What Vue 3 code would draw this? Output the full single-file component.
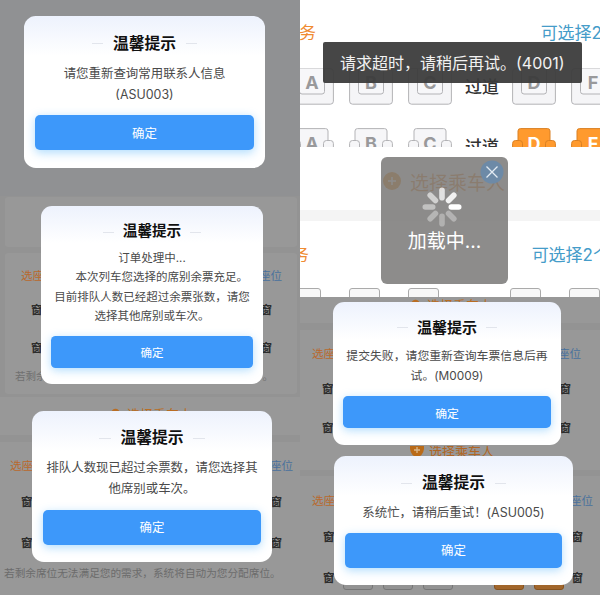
<script setup>
const dialogs = [
  { id: 'contacts', lines: ['请您重新查询常用联系人信息', '(ASU003)'] },
  { id: 'queue', lines: ['订单处理中...', '      本次列车您选择的席别余票充足。', '目前排队人数已经超过余票张数，请您', '选择其他席别或车次。'] },
  { id: 'over', lines: ['排队人数现已超过余票数，请您选择其', '他席别或车次。'] },
  { id: 'submit', lines: ['提交失败，请您重新查询车票信息后再', '试。(M0009)'] },
  { id: 'busy', lines: ['系统忙，请稍后重试！(ASU005)'] },
]
const spokes = [
  { a: 90, o: 1 }, { a: 45, o: 0.88 }, { a: 0, o: 0.74 }, { a: 315, o: 0.6 },
  { a: 270, o: 0.46 }, { a: 225, o: 0.36 }, { a: 180, o: 0.32 }, { a: 135, o: 0.34 },
]
const seats = ['A', 'B', 'C', '', 'D', 'F']
</script>

<template>
  <main class="collage">
    <div class="column">
      <section class="shot plain"></section>

      <section class="shot gray second">
        <div class="card blank"></div>
        <div class="card seats-card">
          <div class="line head"><span class="orange">选座</span><span class="blue">座位</span></div>
          <div class="line win"><span>窗</span><span>窗</span></div>
          <div class="line win"><span>窗</span><span>窗</span></div>
          <div class="line note"><span>若剩余</span><span>。</span></div>
        </div>
      </section>

      <section class="shot gray third">
        <div class="picker">
          <svg width="9" height="12" viewBox="0 0 9 12"><circle cx="4.5" cy="6" r="4.2" fill="#b96d23" /></svg>
          <span>选择乘车人</span>
        </div>
        <div class="band"></div>
        <div class="line head"><span class="orange">选座</span><span class="blue">座位</span></div>
        <div class="line win"><span>窗</span><span>窗</span></div>
        <div class="line win"><span>窗</span><span>窗</span></div>
        <p class="footnote">若剩余席位无法满足您的需求，系统将自动为您分配席位。</p>
      </section>
    </div>

    <div class="column">
      <section class="shot white timeout">
        <div class="service"><span class="orange">务</span><span class="blue">可选择2</span></div>
        <div class="seat-row">
          <template v-for="s in seats" :key="s">
            <svg v-if="s" class="seat" width="44" height="37" viewBox="0 0 44 37">
              <rect x=".6" y=".6" width="42.8" height="35.6" rx="3" fill="#f5f5f7" stroke="#b3b3b6" />
              <path d="M9.5 .6V23.5Q9.5 26 12 26H32Q34.5 26 34.5 23.5V.6" fill="#f7f7f9" stroke="#b3b3b6" />
              <text x="22" y="21" text-anchor="middle">{{ s }}</text>
            </svg>
            <span v-else class="aisle">过道</span>
          </template>
        </div>
        <div class="seat-row lower">
          <template v-for="s in seats" :key="s">
            <svg v-if="s" class="seat" :class="{ picked: s === 'D' || s === 'F' }" width="44" height="19" viewBox="0 0 44 19">
              <path class="shape" d="M6 22V3Q6 .6 8.5 .6H35.5Q38 .6 38 3V22Z" />
              <path class="shape" d="M.6 22V15.5Q.6 12.5 3.5 12.5H7.5Q10.5 12.5 10.5 15.5V22M33.5 22V15.5Q33.5 12.5 36.5 12.5H40.5Q43.4 12.5 43.4 15.5V22" />
              <text x="22" y="21.5" text-anchor="middle">{{ s }}</text>
            </svg>
            <span v-else class="aisle">过道</span>
          </template>
        </div>
      </section>

      <section class="shot white waiting">
        <div class="picker">
          <svg width="18" height="18" viewBox="0 0 18 18"><circle cx="9" cy="9" r="9" fill="#f08a10" /><path d="M9 5V13M5 9H13" stroke="#fff" stroke-width="1.5" /></svg>
          <span>选择乘车人</span>
        </div>
        <div class="band"></div>
        <div class="service"><span class="orange">务</span><span class="blue">可选择2个</span></div>
        <div class="seat-row tops">
          <template v-for="s in seats" :key="s">
            <i v-if="s" class="top"></i>
            <i v-else class="gap"></i>
          </template>
        </div>
      </section>

      <section class="shot gray fourth">
        <div class="picker">
          <svg width="9" height="12" viewBox="0 0 9 12"><circle cx="4.5" cy="6" r="4.2" fill="#b96d23" /></svg>
          <span>选择乘车人</span>
        </div>
        <div class="band"></div>
        <div class="line head"><span class="orange">选座</span><span class="blue">座位</span></div>
        <div class="line win"><span>窗</span><span>窗</span></div>
        <div class="line win"><span>窗</span><span>窗</span></div>
      </section>

      <section class="shot gray fifth">
        <div class="picker">
          <svg width="14" height="13" viewBox="0 0 14 13"><path d="M0 0H14V4Q13 11 7 12Q1 11 0 4Z" fill="#b96a18" /><path d="M7 2V8M4 5H10" stroke="#d9b78c" stroke-width="1.3" /></svg>
          <span>选择乘车人</span>
        </div>
        <div class="band"></div>
        <div class="line head"><span class="orange">选座</span><span class="blue">座位</span></div>
        <div class="line win"><span>窗</span><span>窗</span></div>
        <div class="line win"><span>窗</span><span>窗</span></div>
        <div class="bottoms"><i></i><i></i><i></i><i class="on"></i><i class="on"></i></div>
      </section>
    </div>

    <div class="toast">请求超时，请稍后再试。(4001)</div>

    <div class="loading">
      <svg class="close" width="24" height="24" viewBox="0 0 24 24">
        <circle cx="12" cy="12" r="11.5" fill="#6d8aa7" />
        <path d="M6.5 6.5L17.5 17.5M17.5 6.5L6.5 17.5" stroke="#e3ebf3" stroke-width="1.3" />
      </svg>
      <svg class="spinner" width="40" height="40" viewBox="-20 -20 40 40">
        <rect v-for="s in spokes" :key="s.a" x="-2.8" y="-19.5" width="5.6" height="13" rx="2.8" fill="#fff" :opacity="s.o" :transform="`rotate(${s.a})`" />
      </svg>
      <span>加载中...</span>
    </div>

    <article v-for="d in dialogs" :key="d.id" class="dialog" :class="d.id">
      <h2>温馨提示</h2>
      <div class="message"><p v-for="l in d.lines" :key="l">{{ l }}</p></div>
      <button>确定</button>
    </article>
  </main>
</template>

<style>
body { margin: 0; background: #959595; }
</style>

<style scoped>
* { box-sizing: border-box; }
.collage {
  position: relative;
  display: grid;
  grid-template-columns: 300px 300px;
  width: 600px;
  height: 595px;
  overflow: hidden;
  font-family: Inter, "Noto Sans CJK SC", sans-serif;
}
.column { display: flex; flex-direction: column; min-width: 0; }
.shot { overflow: hidden; flex: none; }
.plain { height: 196px; background: #909193; }
.gray { background: #989898; font-size: 11.5px; }
.line { display: flex; justify-content: space-between; align-items: center; white-space: nowrap; }
.gray .orange { color: #b8692c; }
.gray .blue { color: #49719d; }
.win { font-weight: 700; color: #2d2d2d; }
.band { background: #939393; flex: none; }
.picker { display: flex; align-items: center; white-space: nowrap; overflow: hidden; }

.second { height: 201px; padding: 1px 3px 3px 5px; background: #939393; display: flex; flex-direction: column; gap: 6px; }
.card { background: #989898; border-radius: 3px; }
.blank { height: 50px; }
.seats-card { height: 141px; padding-top: 10px; }
.seats-card .head { height: 24px; padding: 0 15px 0 16px; }
.seats-card .win { height: 38px; padding: 0 25px 0 26px; }
.seats-card .head + .win { margin-top: 3px; }
.seats-card .note { height: 18px; padding: 0 24px 0 10px; font-size: 10.5px; color: #707070; }

.third { height: 198px; }
.third .picker, .fourth .picker { height: 24px; padding-left: 111px; gap: 7px; color: #b96d23; font-size: 13px; }
.third .picker { margin-top: 4px; }
.third .band { height: 7px; margin-top: 10px; }
.third .head { height: 24px; margin-top: 11px; padding: 0 7px 0 10px; }
.third .win { height: 41px; padding: 0 18px 0 21px; }
.third .head + .win { margin-top: 3px; }
.footnote { margin: 2px 0 0; padding-left: 4px; height: 20px; line-height: 20px; font-size: 10.65px; color: #6c6c6c; white-space: nowrap; }

.white { background: #fff; }
.white .orange { color: #f08b31; }
.white .blue { color: #459cc9; }
.service { display: flex; justify-content: space-between; font-size: 17px; line-height: 24px; white-space: nowrap; }
.timeout { height: 147px; }
.timeout .service { padding-top: 21px; margin-right: -2px; margin-left: -1px; }
.seat-row { display: flex; align-items: flex-start; gap: 15px; margin-left: -10px; }
.timeout .seat-row { margin-top: 23px; }
.timeout .lower { margin-top: 23px; }
.seat { flex: none; display: block; }
.seat text { font-size: 18px; font-weight: 700; fill: #99999b; }
.shape { fill: #f6f6f8; stroke: #b3b3b6; }
.picked .shape { fill: #ff9a2e; stroke: #d98024; }
.picked text { fill: #fff; }
.aisle { flex: none; width: 34px; margin: 7px -2px 0 -2px; font-size: 17px; line-height: 24px; font-weight: 500; color: #333; white-space: nowrap; }

.waiting { height: 150px; padding-top: 22px; }
.waiting .picker { height: 24px; padding-left: 83px; gap: 9px; font-size: 19px; color: #e98528; }
.waiting .band { height: 11px; margin-top: 17px; background: #f4f4f4; }
.waiting .service { margin: 22px -10px 0 -8px; }
.waiting .tops { gap: 28px; margin: 21px 0 0 -10px; }
.top { flex: none; width: 31px; height: 12px; border: 1px solid #aaa; border-radius: 3px; background: #f7f7f7; }
.tops .gap { flex: none; width: 15px; }

.fourth { height: 149px; }
.fourth .picker { margin-top: -5px; }
.fourth .band { height: 7px; margin-top: 7px; }
.fourth .head { height: 24px; margin-top: 11px; padding: 0 19px 0 12px; }
.fourth .win { height: 39px; padding: 0 29px 0 22px; }
.fourth .head + .win { margin-top: 3px; }
.fifth { height: 149px; }
.fifth .picker { height: 13px; margin-top: -1px; padding-left: 110px; gap: 5px; font-size: 13px; line-height: 13px; color: #b06625; }
.fifth .band { height: 6px; margin-top: 12px; }
.fifth .head { height: 24px; margin-top: 12px; padding: 0 7px 0 12px; }
.fifth .win { height: 41px; padding: 0 17px 0 23px; }
.fifth .head + .win { margin-top: 3px; }
.bottoms { display: flex; gap: 10px; margin: -21px 0 0 43px; }
.bottoms i { width: 30px; height: 14px; border: 1px solid #767676; border-radius: 3px; background: #929292; }
.bottoms .on { background: #a1662b; border-color: #86531f; }
.bottoms i:nth-child(4) { margin-left: 31px; }

.toast {
  position: absolute; left: 323px; top: 42px; width: 259px; height: 41px;
  border-radius: 2px; background: rgba(60, 60, 60, .95); color: #f2f2f2;
  font-size: 16px; line-height: 42px; padding-left: 17px; white-space: nowrap;
}
.loading {
  position: absolute; left: 381px; top: 157px; width: 127px; height: 127px;
  display: flex; flex-direction: column; align-items: center;
  border-radius: 6px; background: rgba(124, 123, 122, .87); color: #fff;
  font-size: 19px; line-height: 28px; padding-top: 30px; white-space: nowrap;
}
.loading span { padding-top: 1px; }
.spinner { display: block; margin-left: -5px; }
.close { position: absolute; right: 4px; top: 3px; }

.dialog {
  position: absolute; display: flex; flex-direction: column;
  padding: 0 .88em 1.4em; border-radius: .95em;
  background: linear-gradient(#edf2fd 0, #fff 3.2em);
  color: #4a4a4a; text-align: center;
}
.dialog h2 {
  display: flex; justify-content: center; align-items: center; gap: .6em;
  margin: .84em 0 0; height: 1.75em; font-size: 1.27em; font-weight: 700; line-height: 1.75em; color: #111;
}
.dialog h2::before, .dialog h2::after { content: ""; width: .75em; height: 1px; background: #e2e5ec; }
.message { margin-top: .5em; }
.dialog p { margin: 0; line-height: 1.68em; white-space: pre; }
.dialog button {
  margin: auto 0 0; padding: 0; height: 2.77em; border: 0; border-radius: .4em;
  background: #3d98fa; color: #fff; font: inherit; flex: none;
  box-shadow: 0 .2em .8em rgba(61, 170, 250, .4);
}
.contacts { left: 24px; top: 16px; width: 241px; height: 152px; padding-bottom: 1.46em; font-size: 12.45px; }
.contacts h2 { margin-top: .88em; }
.queue { left: 41px; top: 206px; width: 222px; height: 178px; font-size: 11.5px; }
.queue h2 { margin-top: .92em; }
.queue .message { margin-top: .36em; }
.over { left: 32px; top: 411px; width: 240px; height: 151px; font-size: 12.43px; }
.submit { left: 333px; top: 302px; width: 228px; height: 143px; font-size: 11.85px; }
.busy { left: 334px; top: 456px; width: 239px; height: 129px; font-size: 12.43px; }
</style>
